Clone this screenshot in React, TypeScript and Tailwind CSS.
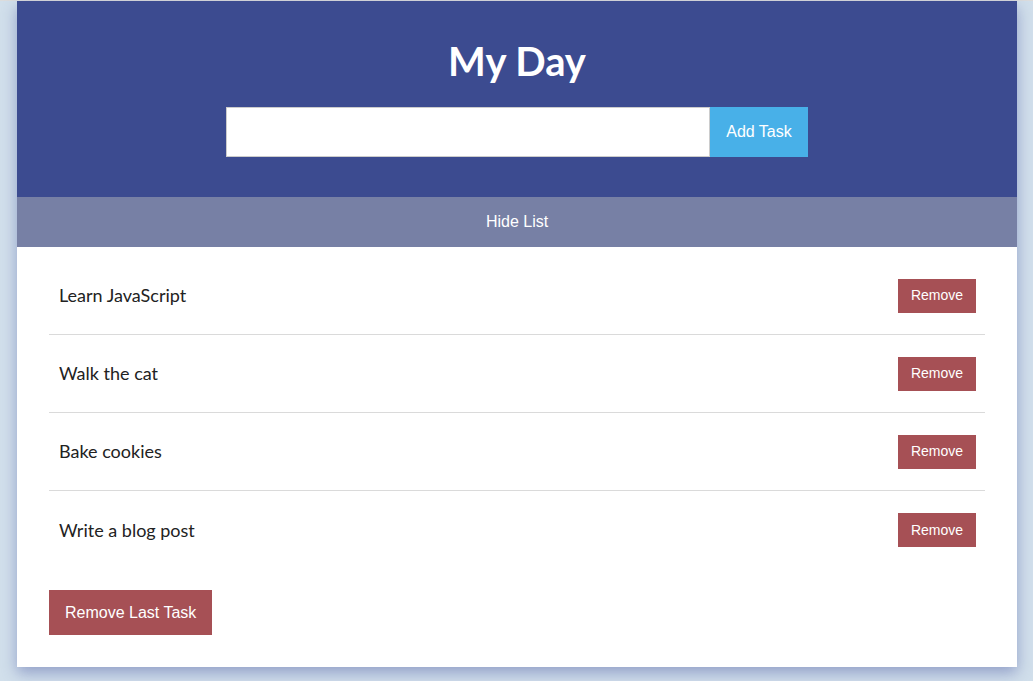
import { useState } from "react";

const initialTasks = ["Learn JavaScript", "Walk the cat", "Bake cookies", "Write a blog post"];

export default function App() {
  const [tasks, setTasks] = useState(initialTasks);
  const [text, setText] = useState("");
  const [showList, setShowList] = useState(true);

  function addTask() {
    if (!text.trim()) return;
    setTasks([...tasks, text.trim()]);
    setText("");
  }

  return (
    <div className="min-h-screen bg-[#d1dfeb] border-t border-[#dcdcdc] font-['Liberation_Sans',Arial,sans-serif]">
      <div className="ml-[17px] w-[1000px] bg-white shadow-[0_6px_14px_rgba(70,85,160,0.45)]">
        {/* header */}
        <div className="bg-[#3c4b90] flex flex-col items-center pt-[36px] pb-[40px]">
          <h1 className="text-white text-[40px] leading-[48px] font-bold font-['Lato',sans-serif] mb-[22px]">
            My Day
          </h1>
          <div className="flex">
            <input
              type="text"
              value={text}
              onChange={(e) => setText(e.target.value)}
              className="w-[484px] h-[50px] bg-white border border-[#ccc] px-3 text-base outline-none"
            />
            <button
              onClick={addTask}
              className="w-[98px] h-[50px] bg-[#48b0e8] text-white text-base"
            >
              Add Task
            </button>
          </div>
        </div>

        <button
          onClick={() => setShowList(!showList)}
          className="w-full h-[50px] bg-[#7780a5] text-white text-base"
        >
          {showList ? "Hide List" : "Show List"}
        </button>

        <div className="px-[32px] pt-[10px] pb-[32px]">
          {showList && (
            <ul>
              {tasks.map((t, i) => (
                <li
                  key={i}
                  className={
                    "h-[78px] flex items-center justify-between pl-[10px] pr-[9px] " +
                    (i < tasks.length - 1 ? "border-b border-[#dadada]" : "")
                  }
                >
                  <span className="font-['Lato',sans-serif] text-[18px] text-[#222]">{t}</span>
                  <button
                    onClick={() => setTasks(tasks.filter((_, j) => j !== i))}
                    className="w-[78px] h-[34px] bg-[#a65055] text-white text-[14px]"
                  >
                    Remove
                  </button>
                </li>
              ))}
            </ul>
          )}
          <button
            onClick={() => setTasks(tasks.slice(0, -1))}
            className="mt-[21px] h-[45px] px-[16px] bg-[#a65055] text-white text-base"
          >
            Remove Last Task
          </button>
        </div>
      </div>
    </div>
  );
}
